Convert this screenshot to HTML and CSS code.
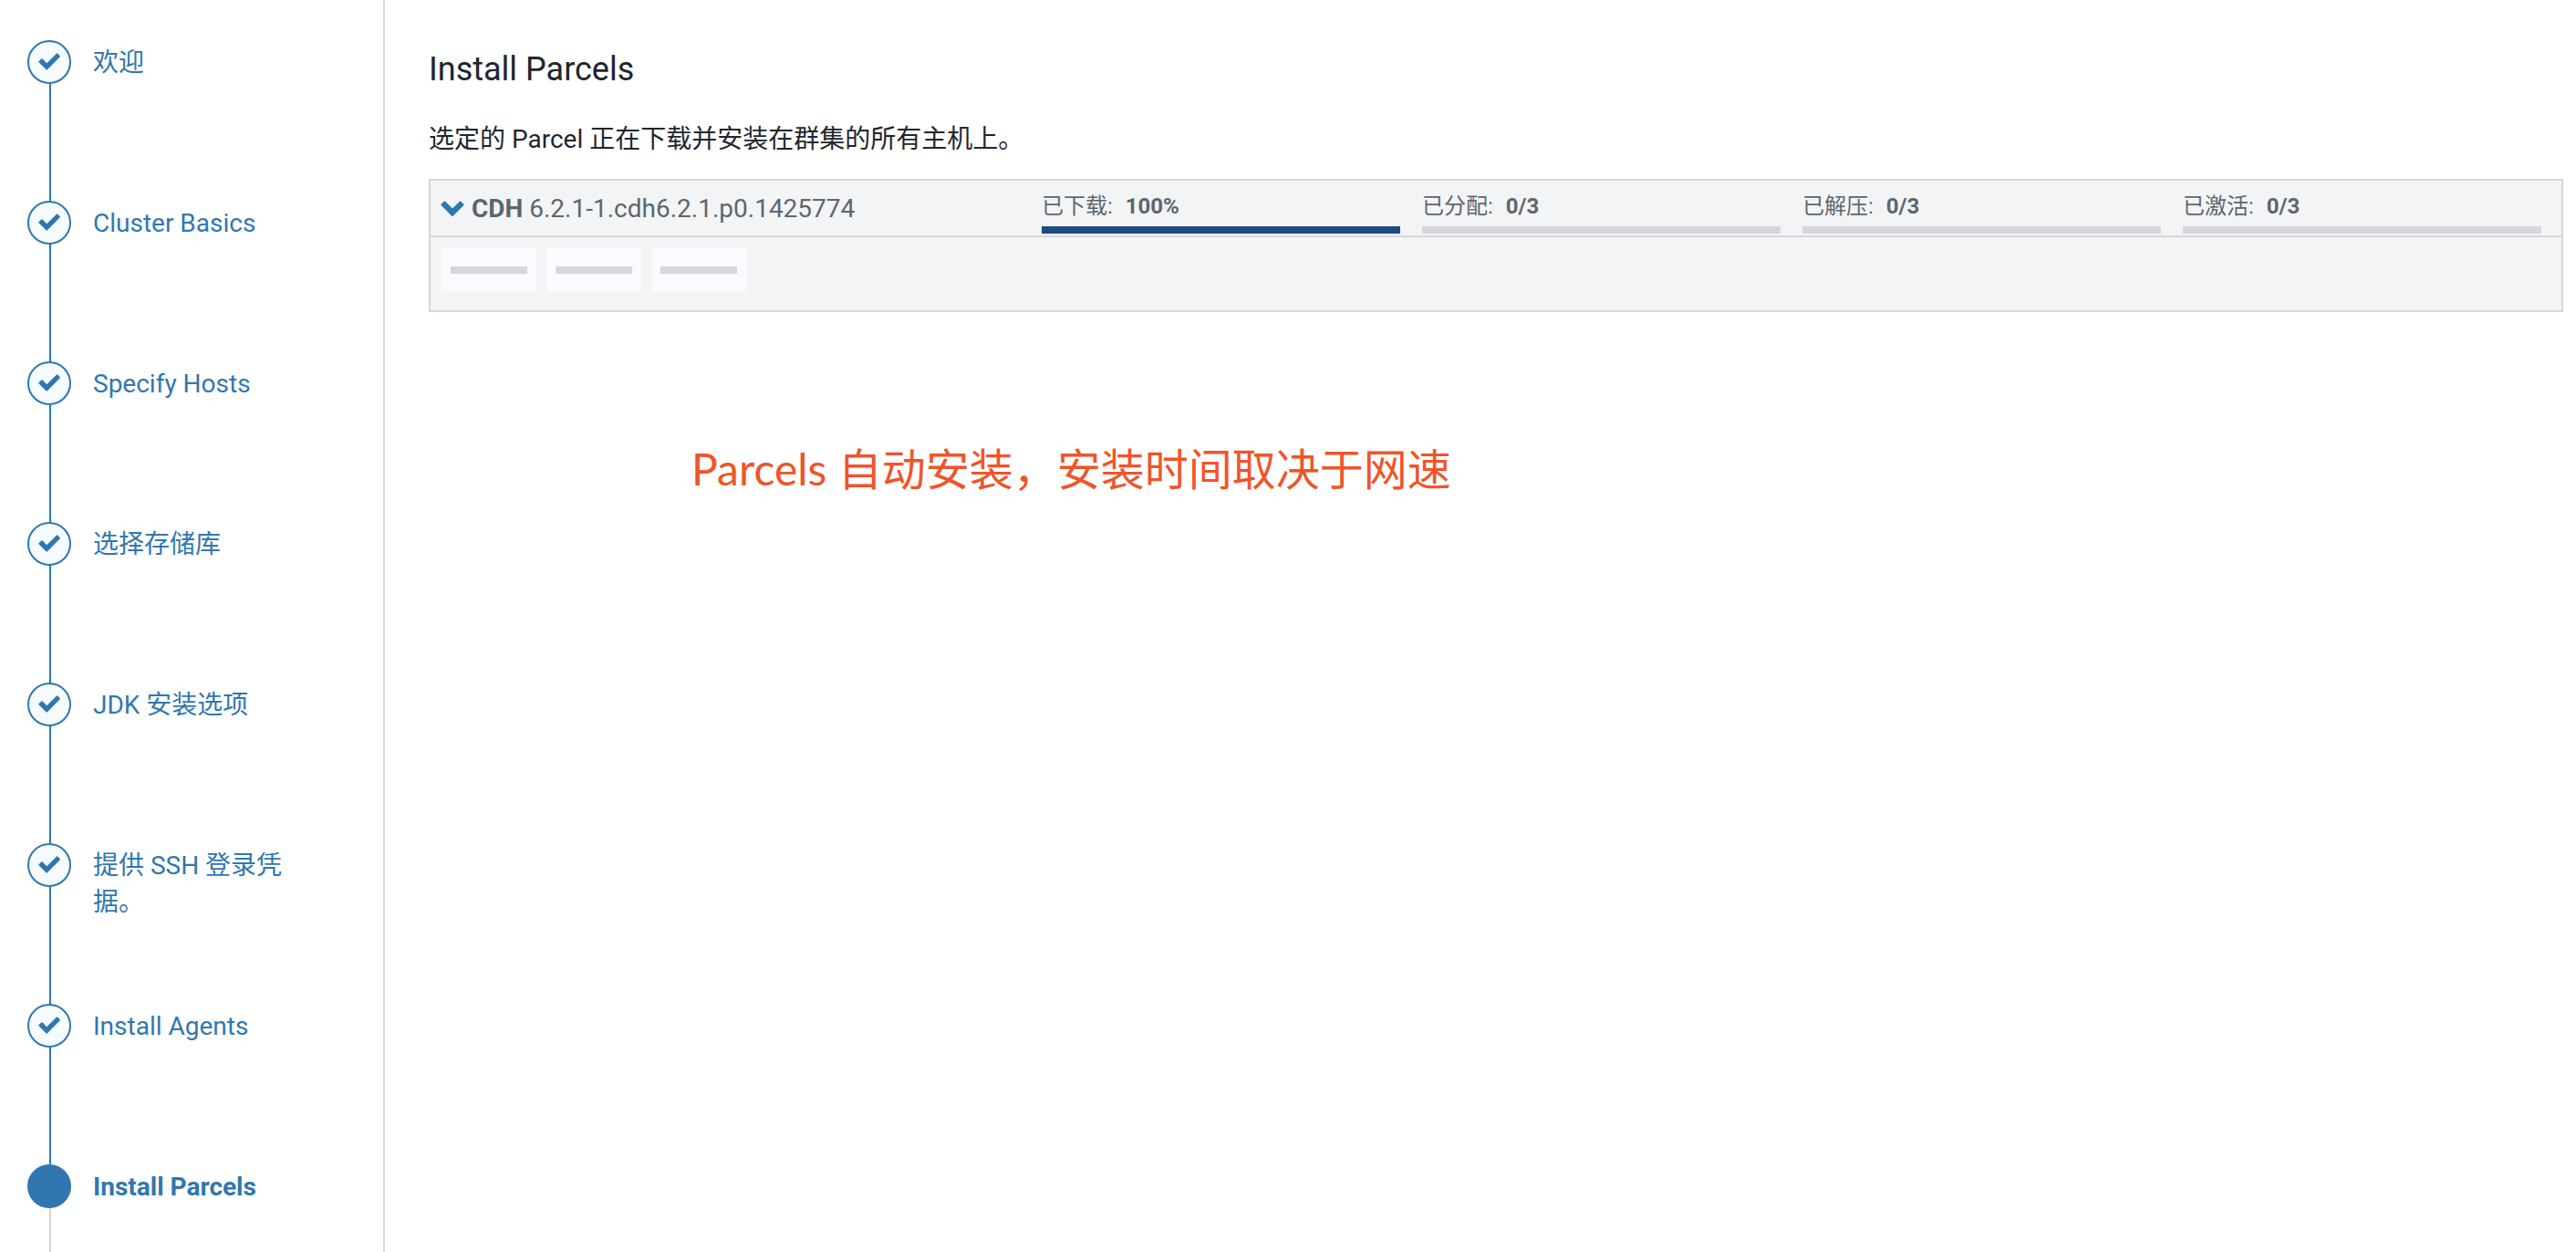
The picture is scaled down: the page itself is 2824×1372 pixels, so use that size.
FILE: index.html
```html
<!DOCTYPE html>
<html lang="zh-CN">
<head>
<meta charset="utf-8">
<title>Install Parcels</title>
<link rel="stylesheet" href="styles.css">
</head>
<body>
<svg class="sprite" aria-hidden="true">
  <symbol id="check" viewBox="0 0 24 20"><path d="M1.400 9.800L4 7.200L9.200 12.600L20.600 1.400L22.800 3.800L9.200 17.600Z" fill="currentColor" stroke="currentColor" stroke-width="2" stroke-linejoin="round"/></symbol>
</svg>
<div class="wizard">
  <nav class="sidebar" aria-label="安装步骤">
    <ol class="steps">
      <li class="step"><span class="marker"><svg class="check"><use href="#check"/></svg></span><a class="label" href="#">欢迎</a></li>
      <li class="step"><span class="marker"><svg class="check"><use href="#check"/></svg></span><a class="label" href="#">Cluster Basics</a></li>
      <li class="step"><span class="marker"><svg class="check"><use href="#check"/></svg></span><a class="label" href="#">Specify Hosts</a></li>
      <li class="step"><span class="marker"><svg class="check"><use href="#check"/></svg></span><a class="label" href="#">选择存储库</a></li>
      <li class="step"><span class="marker"><svg class="check"><use href="#check"/></svg></span><a class="label" href="#">JDK 安装选项</a></li>
      <li class="step"><span class="marker"><svg class="check"><use href="#check"/></svg></span><a class="label" href="#">提供 SSH 登录凭据。</a></li>
      <li class="step"><span class="marker"><svg class="check"><use href="#check"/></svg></span><a class="label" href="#">Install Agents</a></li>
      <li class="step current" aria-current="step"><span class="marker"></span><a class="label" href="#">Install Parcels</a></li>
    </ol>
  </nav>
  <main class="content">
    <h1 class="title">Install Parcels</h1>
    <p class="intro">选定的 Parcel 正在下载并安装在群集的所有主机上。</p>
    <section class="parcel">
      <div class="parcel-head">
        <button class="toggle" type="button" aria-expanded="true">
          <svg class="chevron" viewBox="0 0 26 18"><path d="M1.400 4.400L4.400 1.400L13 9.800L21.600 1.400L24.600 4.400L13 16Z" fill="currentColor" stroke="currentColor" stroke-width="2" stroke-linejoin="round"/></svg>
          <span><strong>CDH</strong> 6.2.1-1.cdh6.2.1.p0.1425774</span>
        </button>
        <div class="stage"><div>已下载: <strong class="value">100%</strong></div><div class="bar"><div class="fill" style="width:100%"></div></div></div>
        <div class="stage"><div>已分配: <strong class="value">0/3</strong></div><div class="bar"></div></div>
        <div class="stage"><div>已解压: <strong class="value">0/3</strong></div><div class="bar"></div></div>
        <div class="stage"><div>已激活: <strong class="value">0/3</strong></div><div class="bar"></div></div>
      </div>
      <div class="hosts">
        <div class="host"><div class="bar"></div></div>
        <div class="host"><div class="bar"></div></div>
        <div class="host"><div class="bar"></div></div>
      </div>
    </section>
    <p class="note">Parcels 自动安装，安装时间取决于网速</p>
  </main>
</div>
</body>
</html>
```

FILE: styles.css
```css
* { box-sizing: border-box; }
body {
  margin: 0;
  background: #fff;
  color: #1f262d;
  font: 28px/40px Roboto, "Noto Sans CJK SC", sans-serif;
}
.sprite { display: none; }
.wizard { display: flex; min-height: 100vh; }

.sidebar {
  flex: none;
  width: 422px;
  padding: 44px 100px 0 30px;
  border-right: 2px solid #d6d7dc;
}
.steps {
  display: flex;
  flex-direction: column;
  height: 100%;
  margin: 0;
  padding: 0;
  list-style: none;
  color: #3077b0;
}
.step {
  display: flex;
  align-items: flex-start;
  gap: 24px;
  min-height: 176px;
  background: linear-gradient(#3077b0, #3077b0) 24px 0 / 2px 100% no-repeat;
}
.step.current {
  flex: 1;
  min-height: 96px;
  background-image: linear-gradient(#d6d7dc, #d6d7dc);
  font-weight: 700;
}
.marker {
  display: flex;
  flex: none;
  align-items: center;
  justify-content: center;
  width: 48px;
  height: 48px;
  border: 2px solid #3077b0;
  border-radius: 50%;
  background: #f5fafd;
}
.current .marker { background: #3077b0; }
.check { width: 24px; height: 20px; }
.label {
  padding-top: 5px;
  color: inherit;
  text-decoration: none;
}

.content { flex: 1; min-width: 0; padding: 52px 14px 0 48px; }
.title { margin: 0; font-size: 36px; font-weight: 400; line-height: 48px; }
.intro { margin: 33px 0 23px; }

.parcel {
  border: 2px solid #d6d7dc;
  background: #f3f4f6;
  color: #5c666e;
}
.parcel-head {
  display: grid;
  grid-template-columns: 635px repeat(4, minmax(0, 1fr));
  column-gap: 24px;
  padding: 0 22px 2px 11px;
  border-bottom: 2px solid #d6d7dc;
}
.toggle {
  display: flex;
  align-items: center;
  gap: 8px;
  padding: 4px 0 0;
  border: 0;
  background: none;
  color: inherit;
  font: inherit;
}
.chevron { width: 26px; height: 18px; color: #3077b0; }
.stage { padding-top: 10px; font-size: 24px; line-height: 36px; }
.value { margin-left: 8px; }
.bar { height: 8px; background: #d6d7dc; }
.stage .bar { margin-top: 4px; }
.fill { height: 100%; background: #1d4b80; }
.hosts { display: flex; gap: 11px; padding: 12px 12px 20px; }
.host { width: 104px; height: 48px; padding: 20px 10px; background: #fafbfe; }

.note {
  margin: 136px 0 0 288px;
  color: #f0542a;
  font-family: Lato, "Noto Sans CJK SC", sans-serif;
  font-size: 48px;
  line-height: 72px;
}
```
